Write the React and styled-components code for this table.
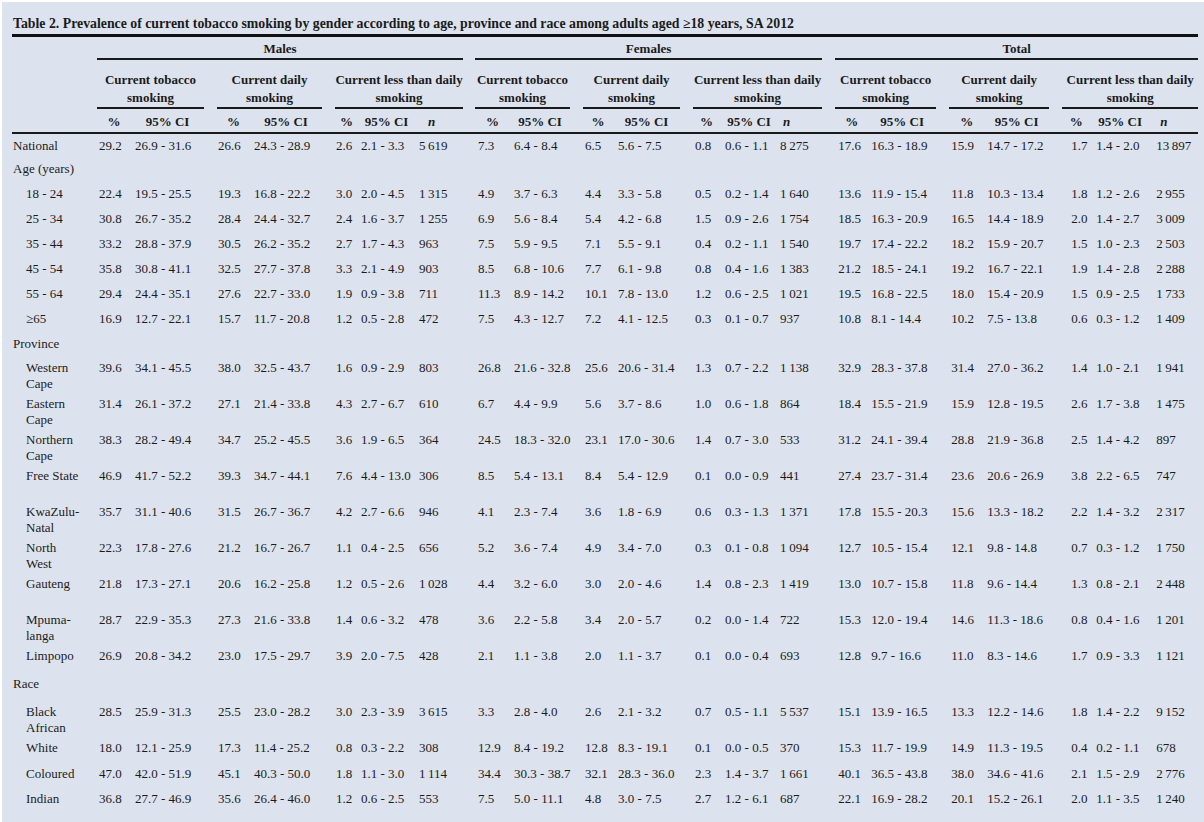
import React from "react";
import styled, { createGlobalStyle } from "styled-components";

const GlobalStyle = createGlobalStyle`
  html, body { margin: 0; padding: 0; background: #ffffff; }
  body { font-family: "Liberation Serif", "Times New Roman", serif; color: #1b1b1b; }
`;

const Page = styled.div`
  margin: 2px 0 0 2px;
  min-height: calc(100vh - 2px);
  box-sizing: border-box;
  background: #dde3ee;
  padding: 14px 6px 0 10px;
`;

const Title = styled.div`
  font-size: 13.8px;
  line-height: 16px;
  font-weight: bold;
  padding: 0 0 2px 1px;
  border-bottom: 3px solid #111;
`;

const Table = styled.table`
  width: 1186px;
  border-collapse: collapse;
  table-layout: fixed;
  font-size: 13px;
`;

const GroupTh = styled.th`
  padding: 4px ${(p) => p.$gap}px 0 0;
  font-weight: bold;
  vertical-align: top;
`;

const GroupLabel = styled.div`
  line-height: 16px;
  padding-bottom: 1px;
  border-bottom: 2px solid #1a1a1a;
  text-align: center;
`;

const SubTh = styled.th`
  padding: 11px ${(p) => p.$gap}px 0 0;
  font-weight: bold;
  vertical-align: top;
`;

const SubLabel = styled.div`
  line-height: 18px;
  border-bottom: 2px solid #1a1a1a;
  text-align: center;
`;

const ColTh = styled.th`
  padding: 5px ${(p) => p.$pr || 0}px 2px ${(p) => p.$pl || 0}px;
  line-height: 16px;
  font-weight: bold;
  font-style: ${(p) => (p.$italic ? "italic" : "normal")};
  text-align: ${(p) => p.$align};
  border-bottom: 2px solid #1a1a1a;
  white-space: nowrap;
`;

const Row = styled.tr`
  height: ${(p) => p.$h}px;
`;

const LabelTd = styled.td`
  vertical-align: top;
  padding: 4px 0 0 ${(p) => (p.$indent ? 14 : 1)}px;
  line-height: 16px;
  white-space: nowrap;
`;

const Td = styled.td`
  vertical-align: top;
  padding: 4px 0 0 ${(p) => p.$pl}px;
  line-height: 16px;
  white-space: nowrap;
`;

const cols = [
  // Males
  { w: 34, p: 2, h: "center" },
  { w: 86, p: 4, h: "center", hr: 13 },
  { w: 33, p: 1, h: "center" },
  { w: 85, p: 4, h: "center", hr: 13 },
  { w: 23, p: 1, h: "center" },
  { w: 57, p: 3, h: "center" },
  { w: 60, p: 4, h: "left", hl: 13 },
  // Females
  { w: 35, p: 3, h: "center" },
  { w: 73, p: 4, h: "center", hr: 13 },
  { w: 30, p: 2, h: "center" },
  { w: 80, p: 5, h: "center", hr: 13 },
  { w: 27, p: 2, h: "center" },
  { w: 58, p: 5, h: "center" },
  { w: 57, p: 2, h: "left", hl: 5 },
  // Total
  { w: 33, p: 3, h: "center" },
  { w: 81, p: 3, h: "center", hr: 13 },
  { w: 35, p: 2, h: "center" },
  { w: 78, p: 3, h: "center", hr: 13 },
  { w: 28, p: 9, h: "center" },
  { w: 60, p: 6, h: "center" },
  { w: 48, p: 6, h: "left", hl: 10 },
];

const colHeads = ["%", "95% CI", "%", "95% CI", "%", "95% CI", "n"];
const groups = [
  { name: "Males", gap: 12 },
  { name: "Females", gap: 13 },
  { name: "Total", gap: 0 },
];
const subs = [
  { lines: ["Current tobacco", "smoking"], span: 2 },
  { lines: ["Current daily", "smoking"], span: 2 },
  { lines: ["Current less than daily", "smoking"], span: 3 },
];

const T = "\u2009";

const rows = [
  { label: ["National"], h: 24, v: "29.2|26.9 - 31.6|26.6|24.3 - 28.9|2.6|2.1 - 3.3|5 619|7.3|6.4 - 8.4|6.5|5.6 - 7.5|0.8|0.6 - 1.1|8 275|17.6|16.3 - 18.9|15.9|14.7 - 17.2|1.7|1.4 - 2.0|13 897" },
  { section: "Age (years)", h: 25 },
  { label: ["18 - 24"], indent: true, h: 25, v: "22.4|19.5 - 25.5|19.3|16.8 - 22.2|3.0|2.0 - 4.5|1 315|4.9|3.7 - 6.3|4.4|3.3 - 5.8|0.5|0.2 - 1.4|1 640|13.6|11.9 - 15.4|11.8|10.3 - 13.4|1.8|1.2 - 2.6|2 955" },
  { label: ["25 - 34"], indent: true, h: 25, v: "30.8|26.7 - 35.2|28.4|24.4 - 32.7|2.4|1.6 - 3.7|1 255|6.9|5.6 - 8.4|5.4|4.2 - 6.8|1.5|0.9 - 2.6|1 754|18.5|16.3 - 20.9|16.5|14.4 - 18.9|2.0|1.4 - 2.7|3 009" },
  { label: ["35 - 44"], indent: true, h: 25, v: "33.2|28.8 - 37.9|30.5|26.2 - 35.2|2.7|1.7 - 4.3|963|7.5|5.9 - 9.5|7.1|5.5 - 9.1|0.4|0.2 - 1.1|1 540|19.7|17.4 - 22.2|18.2|15.9 - 20.7|1.5|1.0 - 2.3|2 503" },
  { label: ["45 - 54"], indent: true, h: 25, v: "35.8|30.8 - 41.1|32.5|27.7 - 37.8|3.3|2.1 - 4.9|903|8.5|6.8 - 10.6|7.7|6.1 - 9.8|0.8|0.4 - 1.6|1 383|21.2|18.5 - 24.1|19.2|16.7 - 22.1|1.9|1.4 - 2.8|2 288" },
  { label: ["55 - 64"], indent: true, h: 25, v: "29.4|24.4 - 35.1|27.6|22.7 - 33.0|1.9|0.9 - 3.8|711|11.3|8.9 - 14.2|10.1|7.8 - 13.0|1.2|0.6 - 2.5|1 021|19.5|16.8 - 22.5|18.0|15.4 - 20.9|1.5|0.9 - 2.5|1 733" },
  { label: ["\u226565"], indent: true, h: 25, v: "16.9|12.7 - 22.1|15.7|11.7 - 20.8|1.2|0.5 - 2.8|472|7.5|4.3 - 12.7|7.2|4.1 - 12.5|0.3|0.1 - 0.7|937|10.8|8.1 - 14.4|10.2|7.5 - 13.8|0.6|0.3 - 1.2|1 409" },
  { section: "Province", h: 24 },
  { label: ["Western", "Cape"], indent: true, h: 36, v: "39.6|34.1 - 45.5|38.0|32.5 - 43.7|1.6|0.9 - 2.9|803|26.8|21.6 - 32.8|25.6|20.6 - 31.4|1.3|0.7 - 2.2|1 138|32.9|28.3 - 37.8|31.4|27.0 - 36.2|1.4|1.0 - 2.1|1 941" },
  { label: ["Eastern", "Cape"], indent: true, h: 36, v: "31.4|26.1 - 37.2|27.1|21.4 - 33.8|4.3|2.7 - 6.7|610|6.7|4.4 - 9.9|5.6|3.7 - 8.6|1.0|0.6 - 1.8|864|18.4|15.5 - 21.9|15.9|12.8 - 19.5|2.6|1.7 - 3.8|1 475" },
  { label: ["Northern", "Cape"], indent: true, h: 36, v: "38.3|28.2 - 49.4|34.7|25.2 - 45.5|3.6|1.9 - 6.5|364|24.5|18.3 - 32.0|23.1|17.0 - 30.6|1.4|0.7 - 3.0|533|31.2|24.1 - 39.4|28.8|21.9 - 36.8|2.5|1.4 - 4.2|897" },
  { label: ["Free State"], indent: true, h: 36, v: "46.9|41.7 - 52.2|39.3|34.7 - 44.1|7.6|4.4 - 13.0|306|8.5|5.4 - 13.1|8.4|5.4 - 12.9|0.1|0.0 - 0.9|441|27.4|23.7 - 31.4|23.6|20.6 - 26.9|3.8|2.2 - 6.5|747" },
  { label: ["KwaZulu-", "Natal"], indent: true, h: 36, v: "35.7|31.1 - 40.6|31.5|26.7 - 36.7|4.2|2.7 - 6.6|946|4.1|2.3 - 7.4|3.6|1.8 - 6.9|0.6|0.3 - 1.3|1 371|17.8|15.5 - 20.3|15.6|13.3 - 18.2|2.2|1.4 - 3.2|2 317" },
  { label: ["North", "West"], indent: true, h: 36, v: "22.3|17.8 - 27.6|21.2|16.7 - 26.7|1.1|0.4 - 2.5|656|5.2|3.6 - 7.4|4.9|3.4 - 7.0|0.3|0.1 - 0.8|1 094|12.7|10.5 - 15.4|12.1|9.8 - 14.8|0.7|0.3 - 1.2|1 750" },
  { label: ["Gauteng"], indent: true, h: 36, v: "21.8|17.3 - 27.1|20.6|16.2 - 25.8|1.2|0.5 - 2.6|1 028|4.4|3.2 - 6.0|3.0|2.0 - 4.6|1.4|0.8 - 2.3|1 419|13.0|10.7 - 15.8|11.8|9.6 - 14.4|1.3|0.8 - 2.1|2 448" },
  { label: ["Mpuma-", "langa"], indent: true, h: 36, v: "28.7|22.9 - 35.3|27.3|21.6 - 33.8|1.4|0.6 - 3.2|478|3.6|2.2 - 5.8|3.4|2.0 - 5.7|0.2|0.0 - 1.4|722|15.3|12.0 - 19.4|14.6|11.3 - 18.6|0.8|0.4 - 1.6|1 201" },
  { label: ["Limpopo"], indent: true, h: 28, v: "26.9|20.8 - 34.2|23.0|17.5 - 29.7|3.9|2.0 - 7.5|428|2.1|1.1 - 3.8|2.0|1.1 - 3.7|0.1|0.0 - 0.4|693|12.8|9.7 - 16.6|11.0|8.3 - 14.6|1.7|0.9 - 3.3|1 121" },
  { section: "Race", h: 28 },
  { label: ["Black", "African"], indent: true, h: 33, v: "28.5|25.9 - 31.3|25.5|23.0 - 28.2|3.0|2.3 - 3.9|3 615|3.3|2.8 - 4.0|2.6|2.1 - 3.2|0.7|0.5 - 1.1|5 537|15.1|13.9 - 16.5|13.3|12.2 - 14.6|1.8|1.4 - 2.2|9 152" },
  { label: ["White"], indent: true, h: 26, v: "18.0|12.1 - 25.9|17.3|11.4 - 25.2|0.8|0.3 - 2.2|308|12.9|8.4 - 19.2|12.8|8.3 - 19.1|0.1|0.0 - 0.5|370|15.3|11.7 - 19.9|14.9|11.3 - 19.5|0.4|0.2 - 1.1|678" },
  { label: ["Coloured"], indent: true, h: 25, v: "47.0|42.0 - 51.9|45.1|40.3 - 50.0|1.8|1.1 - 3.0|1 114|34.4|30.3 - 38.7|32.1|28.3 - 36.0|2.3|1.4 - 3.7|1 661|40.1|36.5 - 43.8|38.0|34.6 - 41.6|2.1|1.5 - 2.9|2 776" },
  { label: ["Indian"], indent: true, h: 25, v: "36.8|27.7 - 46.9|35.6|26.4 - 46.0|1.2|0.6 - 2.5|553|7.5|5.0 - 11.1|4.8|3.0 - 7.5|2.7|1.2 - 6.1|687|22.1|16.9 - 28.2|20.1|15.2 - 26.1|2.0|1.1 - 3.5|1 240" },
];

const fmt = (s) => s.replace(/^(\d+) (\d{3})$/, `$1${T}$2`);

export default function App() {
  return (
    <>
      <GlobalStyle />
      <Page>
        <Title>
          Table 2. Prevalence of current tobacco smoking by gender according to age, province and race among adults aged ≥18 years, SA 2012
        </Title>
        <Table>
          <colgroup>
            <col style={{ width: 85 }} />
            {cols.map((c, i) => (
              <col key={i} style={{ width: c.w }} />
            ))}
          </colgroup>
          <thead>
            <tr>
              <th />
              {groups.map((g) => (
                <GroupTh key={g.name} colSpan={7} $gap={g.gap}>
                  <GroupLabel>{g.name}</GroupLabel>
                </GroupTh>
              ))}
            </tr>
            <tr>
              <th />
              {groups.map((g, gi) =>
                subs.map((s, si) => (
                  <SubTh
                    key={`${gi}-${si}`}
                    colSpan={s.span}
                    $gap={gi === 2 && si === 2 ? 0 : si === 2 && gi === 0 ? 12 : 13}
                  >
                    <SubLabel>
                      {s.lines[0]}
                      <br />
                      {s.lines[1]}
                    </SubLabel>
                  </SubTh>
                ))
              )}
            </tr>
            <tr>
              <ColTh $align="left" />
              {cols.map((c, i) => {
                const label = colHeads[i % 7];
                return (
                  <ColTh
                    key={i}
                    $align={c.h}
                    $pl={c.hl}
                    $pr={c.hr}
                    $italic={label === "n"}
                  >
                    {label}
                  </ColTh>
                );
              })}
            </tr>
          </thead>
          <tbody>
            {rows.map((r, ri) =>
              r.section ? (
                <Row key={ri} $h={r.h}>
                  <LabelTd colSpan={22}>{r.section}</LabelTd>
                </Row>
              ) : (
                <Row key={ri} $h={r.h}>
                  <LabelTd $indent={r.indent}>
                    {r.label.map((l, li) => (
                      <React.Fragment key={li}>
                        {li > 0 && <br />}
                        {l}
                      </React.Fragment>
                    ))}
                  </LabelTd>
                  {r.v.split("|").map((val, ci) => (
                    <Td key={ci} $pl={cols[ci].p}>
                      {fmt(val)}
                    </Td>
                  ))}
                </Row>
              )
            )}
          </tbody>
        </Table>
      </Page>
    </>
  );
}
